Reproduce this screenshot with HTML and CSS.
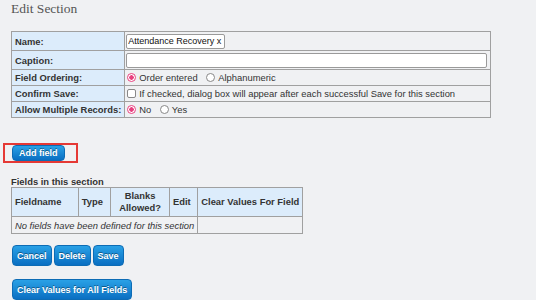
FILE: index.html
```html
<!DOCTYPE html>
<html lang="en">
<head>
  <meta charset="UTF-8">
  <title>Edit Section</title>
  <link rel="stylesheet" href="styles.css">
</head>
<body>
  <div class="page">
    <h1 class="page-title">Edit Section</h1>

    <table class="section-form">
      <tr class="row-name">
        <th>Name:</th>
        <td><input type="text" class="name-input" value="Attendance Recovery x"></td>
      </tr>
      <tr class="row-caption">
        <th>Caption:</th>
        <td><input type="text" class="caption-input"></td>
      </tr>
      <tr class="row-small">
        <th>Field Ordering:</th>
        <td>
          <span class="opt"><span class="radio checked"></span>Order entered</span>
          <span class="opt"><span class="radio"></span>Alphanumeric</span>
        </td>
      </tr>
      <tr class="row-small">
        <th>Confirm Save:</th>
        <td><span class="opt"><span class="checkbox"></span>If checked, dialog box will appear after each successful Save for this section</span></td>
      </tr>
      <tr class="row-small">
        <th>Allow Multiple Records:</th>
        <td>
          <span class="opt"><span class="radio checked"></span>No</span>
          <span class="opt"><span class="radio"></span>Yes</span>
        </td>
      </tr>
    </table>

    <div class="highlight">
      <button class="btn btn-small">Add field</button>
    </div>

    <div class="fields-title">Fields in this section</div>
    <table class="fields">
      <tr>
        <th class="c-name">Fieldname</th>
        <th class="c-type">Type</th>
        <th class="c-blank">Blanks<br>Allowed?</th>
        <th class="c-edit">Edit</th>
        <th class="c-clear">Clear Values For Field</th>
      </tr>
      <tr>
        <td colspan="4" class="empty">No fields have been defined for this section</td>
        <td></td>
      </tr>
    </table>

    <div class="actions">
      <button class="btn">Cancel</button>
      <button class="btn">Delete</button>
      <button class="btn">Save</button>
    </div>

    <div class="actions actions-last">
      <button class="btn">Clear Values for All Fields</button>
    </div>
  </div>
</body>
</html>
```

FILE: styles.css
```css
/* General */
body {
  margin: 0;
  padding: 0;
  background: #f0f1f3;
  font-family: 'Liberation Sans', Arial, sans-serif;
  font-size: 9.4px;
  color: #333;
  overflow: hidden;
}

.page {
  padding-left: 11px;
}

.page-title {
  margin: 0;
  font-family: 'Liberation Serif', 'Times New Roman', serif;
  font-weight: normal;
  font-size: 13.5px;
  line-height: 18px;
  color: #555;
}

/* Section form table */
.section-form {
  margin-top: 13px;
  width: 480px;
  border-collapse: collapse;
  border: 1px solid #8c8c8c;
}

.section-form th,
.section-form td {
  border: 1px solid #a0a0a0;
  padding: 0 3px;
  text-align: left;
  vertical-align: middle;
}

.section-form th {
  width: 103px;
  background: #dcecfb;
  font-weight: bold;
  white-space: nowrap;
}

.section-form td {
  padding-left: 1px;
}

.row-name,
.row-caption {
  height: 19px;
}

.row-small {
  height: 16px;
}

.section-form input {
  display: block;
  box-sizing: border-box;
  height: 15px;
  border: 1px solid #9a9a9a;
  border-radius: 2px;
  background: #fff;
  font-family: inherit;
  font-size: 9px;
  color: #111;
  padding: 0 1px;
}

.name-input {
  width: 99px;
}

.caption-input {
  width: 100%;
}

.opt {
  display: inline-flex;
  align-items: center;
  margin-right: 5px;
  margin-left: 1px;
}

.radio {
  display: inline-block;
  box-sizing: border-box;
  width: 9px;
  height: 9px;
  margin-right: 3px;
  border: 1px solid #888;
  border-radius: 50%;
  background: #fff;
}

.radio.checked {
  border-color: #e8407f;
  background: radial-gradient(circle, #e8407f 0 2px, #fff 2.5px);
}

.checkbox {
  display: inline-block;
  box-sizing: border-box;
  width: 9px;
  height: 9px;
  margin-right: 3px;
  border: 1px solid #888;
  border-radius: 2px;
  background: #fff;
}

/* Buttons */
.btn {
  height: 21px;
  padding: 0 4px;
  border: 1px solid #0d6cb5;
  border-radius: 4px;
  background: linear-gradient(#2aa1e6, #0a6fc2);
  color: #fff;
  font-family: inherit;
  font-size: 9px;
  font-weight: bold;
  text-shadow: 0 -1px 0 rgba(0, 0, 0, 0.4);
  cursor: pointer;
}

.btn-small {
  height: 16px;
  padding: 0 6px;
}

.highlight {
  display: inline-block;
  margin-top: 25px;
  margin-left: -8px;
  padding: 0 11px 0 7px;
  border: 2px solid #e53935;
  height: 16px;
}

/* Fields table */
.fields-title {
  margin-top: 13px;
  font-weight: bold;
  line-height: 11px;
}

.fields {
  border-collapse: collapse;
  border: 1px solid #8c8c8c;
}

.fields th,
.fields td {
  border: 1px solid #a0a0a0;
  padding: 0 3px;
  white-space: nowrap;
}

.fields th {
  height: 28px;
  background: #dcecfb;
  font-weight: bold;
  text-align: left;
  line-height: 12px;
}

.fields td {
  height: 16px;
}

.fields .c-name { width: 59px; }
.fields .c-type { width: 25px; }
.fields .c-blank { width: 51px; text-align: center; }
.fields .c-edit { width: 21px; }
.fields .c-clear { width: 95px; }

.fields .empty {
  font-style: italic;
}

.actions {
  display: flex;
  gap: 2px;
  margin-top: 11px;
  margin-left: 1px;
}

.actions-last {
  margin-top: 13px;
}
```
